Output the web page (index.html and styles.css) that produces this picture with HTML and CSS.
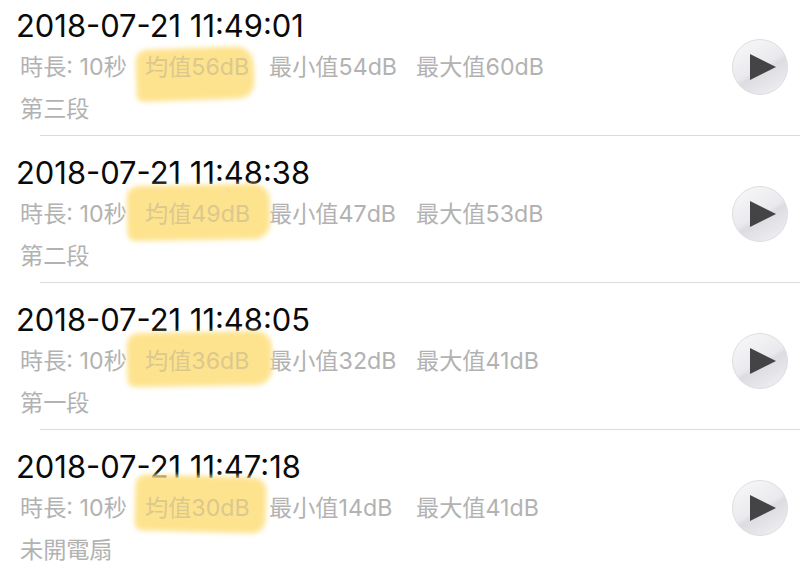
FILE: index.html
```html
<!DOCTYPE html>
<html lang="zh-TW">
<head>
    <meta charset="UTF-8">
    <meta name="viewport" content="width=device-width, initial-scale=1.0">
    <title>錄音列表</title>
    <link rel="stylesheet" href="styles.css">
</head>
<body>
    <main class="list">
        <div class="row first">
            <div class="info">
                <div class="time">2018-07-21 11:49:01</div>
                <div class="stats">
                    <span class="dur">時長: 10秒</span>
                    <span class="avg"><i class="mark mark1"></i><b>均值56dB</b></span>
                    <span class="min">最小值54dB</span>
                    <span>最大值60dB</span>
                </div>
                <div class="note">第三段</div>
            </div>
            <svg class="play" viewBox="0 0 56 56"><use href="#playBtn"/></svg>
        </div>
        <div class="sep"></div>
        <div class="row">
            <div class="info">
                <div class="time">2018-07-21 11:48:38</div>
                <div class="stats">
                    <span class="dur">時長: 10秒</span>
                    <span class="avg"><i class="mark mark2"></i><b>均值49dB</b></span>
                    <span class="min">最小值47dB</span>
                    <span>最大值53dB</span>
                </div>
                <div class="note">第二段</div>
            </div>
            <svg class="play" viewBox="0 0 56 56"><use href="#playBtn"/></svg>
        </div>
        <div class="sep"></div>
        <div class="row">
            <div class="info">
                <div class="time">2018-07-21 11:48:05</div>
                <div class="stats">
                    <span class="dur">時長: 10秒</span>
                    <span class="avg"><i class="mark mark3"></i><b>均值36dB</b></span>
                    <span class="min">最小值32dB</span>
                    <span>最大值41dB</span>
                </div>
                <div class="note">第一段</div>
            </div>
            <svg class="play" viewBox="0 0 56 56"><use href="#playBtn"/></svg>
        </div>
        <div class="sep"></div>
        <div class="row">
            <div class="info">
                <div class="time">2018-07-21 11:47:18</div>
                <div class="stats">
                    <span class="dur">時長: 10秒</span>
                    <span class="avg"><i class="mark mark4"></i><b>均值30dB</b></span>
                    <span class="min">最小值14dB</span>
                    <span>最大值41dB</span>
                </div>
                <div class="note">未開電扇</div>
            </div>
            <svg class="play" viewBox="0 0 56 56"><use href="#playBtn"/></svg>
        </div>
    </main>

    <svg class="defs" width="0" height="0">
        <defs>
            <linearGradient id="btnFill" x1="0.2" y1="0" x2="0.8" y2="1">
                <stop offset="0" stop-color="#f7f7f9"/>
                <stop offset="0.5" stop-color="#eaeaee"/>
                <stop offset="0.58" stop-color="#dcdce1"/>
                <stop offset="1" stop-color="#f0f0f3"/>
            </linearGradient>
            <g id="playBtn">
                <circle cx="28" cy="28" r="27.5" fill="url(#btnFill)" stroke="#dedee2"/>
                <path d="M18 15 L44 28 L18 41 Z" fill="#444446"/>
            </g>
        </defs>
    </svg>
</body>
</html>
```

FILE: styles.css
```css
/* 全局样式 */
* { box-sizing: border-box; }
html, body {
    margin: 0;
    padding: 0;
    background-color: #fff;
    overflow: hidden;
}
body {
    width: 800px;
    height: 572px;
    font-family: Inter, "Noto Sans CJK TC", sans-serif;
}
.defs { position: absolute; }

/* 列表 */
.row {
    display: flex;
    align-items: flex-start;
    justify-content: space-between;
    height: 146px;
    padding: 11px 12px 0 16px;
}
.row.first {
    height: 135px;
    padding-top: 0;
}
.sep {
    height: 1px;
    margin-left: 40px;
    background-color: #dcdcdc;
}
.info { padding-top: 8px; }
.time {
    height: 34px;
    font-size: 30.9px;
    line-height: 36px;
    color: #0a0a0a;
}
.stats {
    display: flex;
    height: 46px;
    padding: 8px 0 0 4px;
    font-size: 23.2px;
    line-height: 34px;
    color: #b2b2b2;
}
.note {
    height: 38px;
    padding: 3px 0 0 4px;
    font-size: 23.2px;
    line-height: 36px;
    color: #b2b2b2;
}
.dur { width: 125px; }
.min { width: 147px; }
.avg { position: relative; width: 124px; }
.avg b { position: relative; font-weight: normal; color: #dbc88e; }

/* 手绘的黄色标记 */
.mark {
    position: absolute;
    background-color: #fee38e;
    filter: blur(2.5px);
}
.mark1 { left: -9px; top: -2px; width: 118px; height: 52px; border-radius: 12px 18px 16px 6px; transform: rotate(-2deg); }
.mark2 { left: -18px; top: -12px; width: 143px; height: 55px; border-radius: 12px 16px 16px 8px; transform: rotate(-1deg); }
.mark3 { left: -18px; top: -12px; width: 145px; height: 54px; border-radius: 12px 16px 16px 8px; transform: rotate(-1deg); }
.mark4 { left: -10px; top: -15px; width: 131px; height: 56px; border-radius: 10px 14px 14px 8px; transform: rotate(1.5deg); }

/* 播放按钮 */
.play {
    width: 56px;
    height: 56px;
    flex: none;
    margin-top: 39px;
}
```
